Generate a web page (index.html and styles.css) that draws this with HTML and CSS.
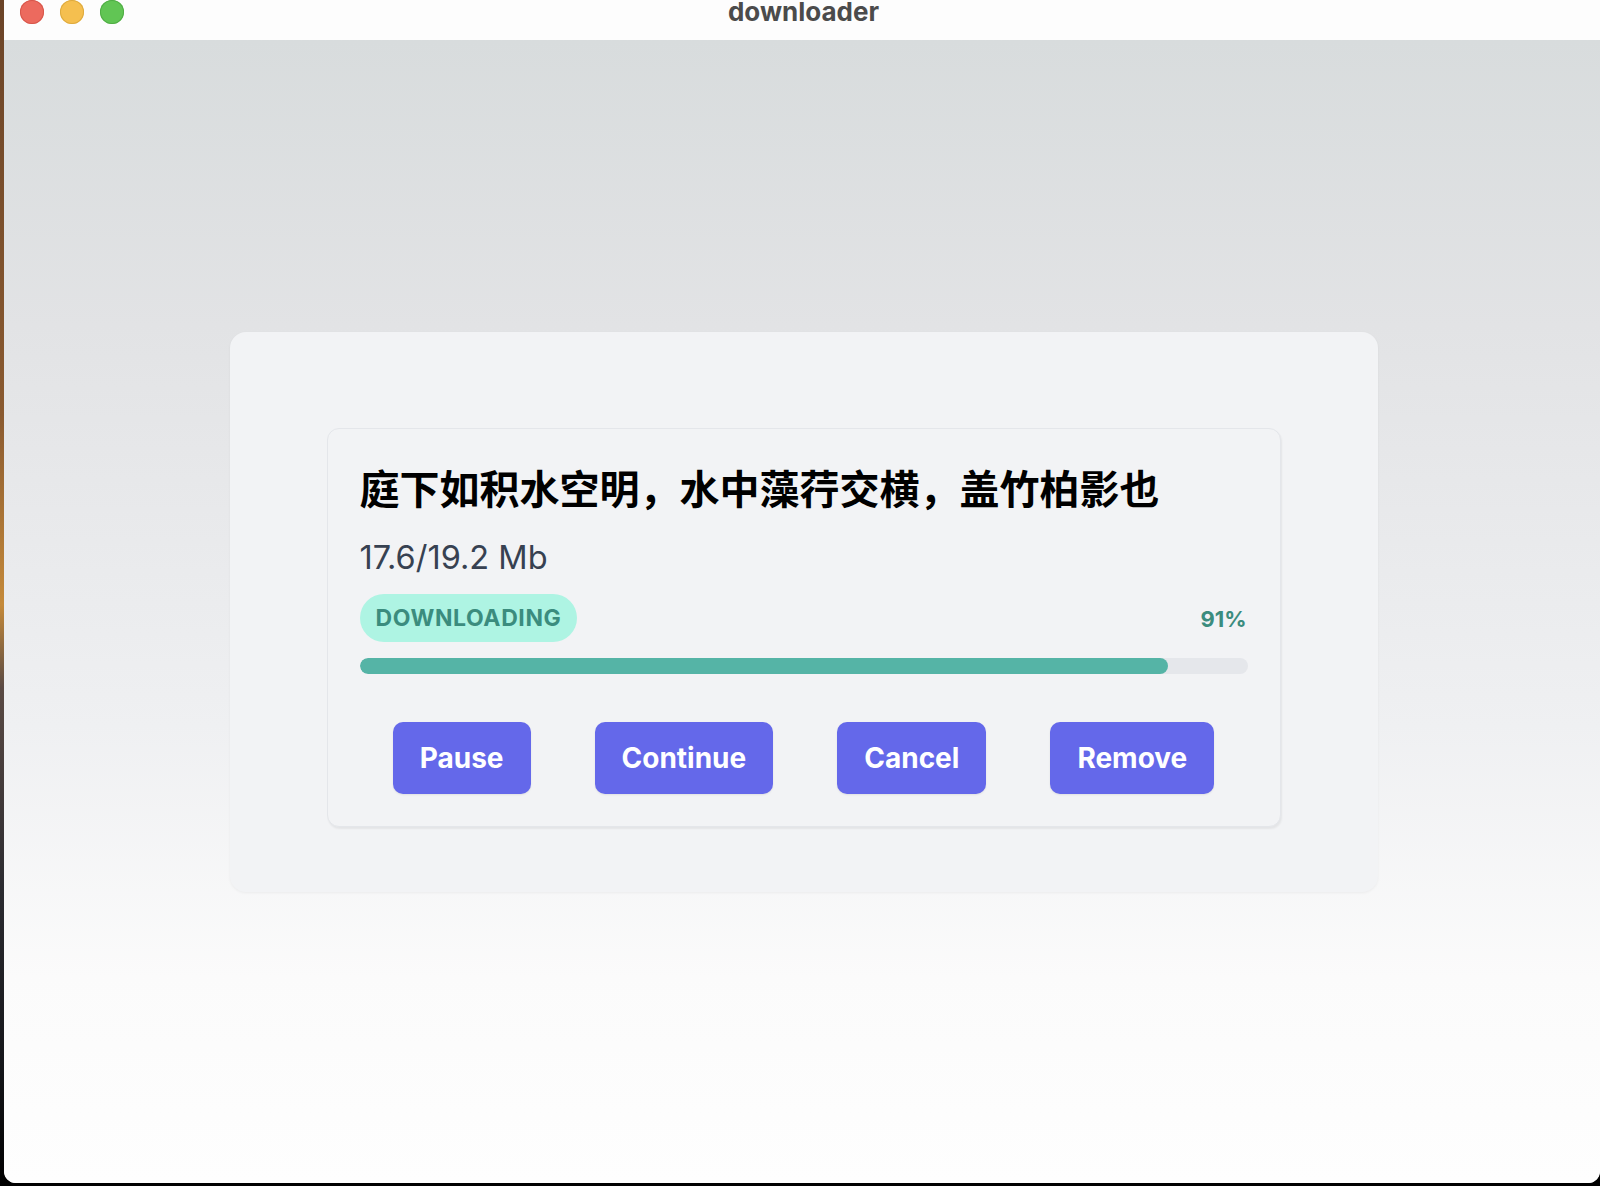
FILE: index.html
```html
<!DOCTYPE html>
<html lang="zh">
<head>
<meta charset="utf-8">
<title>downloader</title>
<link rel="stylesheet" href="styles.css">
</head>
<body>
<div class="screen">
  <div class="wallpaper"></div>
  <div class="window">
    <header class="titlebar">
      <div class="lights">
        <span class="light red"></span>
        <span class="light yellow"></span>
        <span class="light green"></span>
      </div>
      <div class="title">downloader</div>
      <div class="spacer"></div>
    </header>
    <main class="content">
      <section class="panel">
        <div class="task">
          <h1 class="task-name">庭下如积水空明，水中藻荇交横，盖竹柏影也</h1>
          <div class="task-size">17.6/19.2 Mb</div>
          <div class="status-row">
            <span class="badge">DOWNLOADING</span>
            <span class="percent">91%</span>
          </div>
          <div class="track"><div class="fill" style="width: 91%"></div></div>
          <div class="actions">
            <button class="btn">Pause</button>
            <button class="btn">Continue</button>
            <button class="btn">Cancel</button>
            <button class="btn">Remove</button>
          </div>
        </div>
      </section>
    </main>
  </div>
</div>
</body>
</html>
```

FILE: styles.css
```css
* { box-sizing: border-box; }
html, body {
  margin: 0;
  padding: 0;
  width: 1600px;
  height: 1186px;
  overflow: hidden;
  background: #000;
  font-family: Inter, "Noto Sans", "Noto Sans CJK SC", sans-serif;
}
.screen {
  display: flex;
  width: 1600px;
  height: 1186px;
  background: #000;
}
.wallpaper {
  width: 4px;
  height: 1186px;
  background: linear-gradient(180deg, #6b4428 0%, #8a5a30 35%, #c58a3a 51%, #5a4a44 58%, #2b2b30 75%, #15161a 90%, #000 100%);
}
.window {
  flex: 1;
  height: 1183px;
  display: flex;
  flex-direction: column;
  border-bottom-left-radius: 12px;
  border-bottom-right-radius: 12px;
  overflow: hidden;
  background: #fff;
}
.titlebar {
  height: 40px;
  flex: none;
  background: #fdfdfd;
  display: grid;
  grid-template-columns: 1fr auto 1fr;
  align-items: start;
}
.lights {
  display: flex;
  gap: 16px;
  padding-left: 16px;
}
.light {
  width: 24px;
  height: 24px;
  border-radius: 50%;
  display: block;
}
.red { background: #ec6a5e; box-shadow: inset 0 0 0 1px #d7574b; }
.yellow { background: #f5bf4f; box-shadow: inset 0 0 0 1px #deaa3e; }
.green { background: #61c554; box-shadow: inset 0 0 0 1px #50ad45; }
.title {
  font-family: Inter, sans-serif;
  font-weight: 700;
  font-size: 26px;
  line-height: 26px;
  color: #4b4b4b;
  margin-top: -1px;
  padding-left: 3px;
}
.content {
  flex: 1;
  display: flex;
  align-items: center;
  justify-content: center;
  padding-left: 3px;
  background: linear-gradient(180deg, #d8dcdd 0%, #e2e3e5 25%, #eff0f2 60%, #fbfbfb 82%, #fefefe 100%);
}
.panel {
  width: 1148px;
  height: 560px;
  padding: 96px 97px 64px;
  background: #f2f3f5;
  border-radius: 16px;
  box-shadow: 0 1px 3px rgba(0, 0, 0, 0.05);
}
.task {
  border: 1px solid #e4e6ea;
  border-radius: 12px;
  padding: 28px 32px 32px;
  background: #f2f3f5;
  box-shadow: 1px 2px 2px rgba(0, 0, 0, 0.06);
}
.task-name {
  margin: 0;
  font-family: "Noto Sans CJK SC", sans-serif;
  font-weight: 700;
  font-size: 40px;
  line-height: 60px;
  color: #000;
  white-space: nowrap;
}
.task-size {
  margin-top: 17px;
  font-family: Inter, sans-serif;
  font-size: 32.5px;
  line-height: 48px;
  color: #374151;
}
.status-row {
  margin-top: 12px;
  height: 48px;
  display: flex;
  align-items: center;
  justify-content: space-between;
}
.badge {
  height: 48px;
  padding: 0 16px;
  border-radius: 24px;
  background: #aef4e3;
  color: #3b8c7e;
  font-weight: 700;
  font-size: 23px;
  line-height: 48px;
  letter-spacing: 0.6px;
}
.percent {
  color: #3b8c7e;
  font-weight: 700;
  font-size: 22px;
  padding-right: 1px;
  padding-top: 2px;
}
.track {
  margin-top: 16px;
  height: 16px;
  border-radius: 8px;
  background: #e5e7eb;
  overflow: hidden;
}
.fill {
  height: 100%;
  border-radius: 8px;
  background: #55b4a6;
}
.actions {
  margin-top: 48px;
  display: flex;
  justify-content: center;
  gap: 64px;
}
.btn {
  height: 72px;
  padding: 0 27px;
  border: none;
  border-radius: 10px;
  background: #6468ea;
  color: #fff;
  font-family: Inter, sans-serif;
  font-weight: 700;
  font-size: 28px;
  box-shadow: 0 1px 2px rgba(0, 0, 0, 0.08);
}
```
